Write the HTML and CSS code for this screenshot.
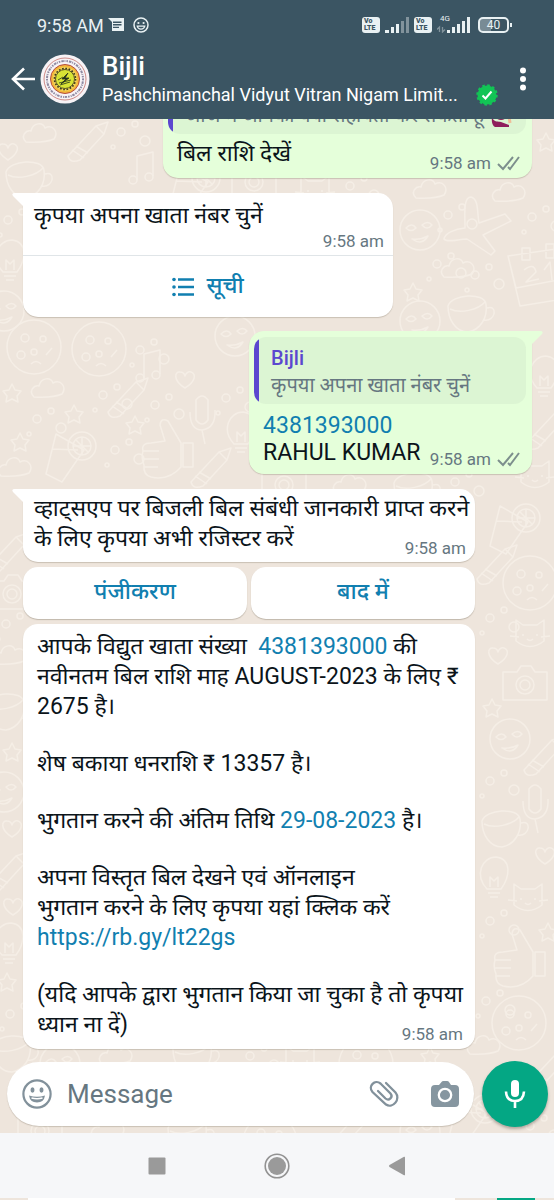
FILE: index.html
```html
<!DOCTYPE html>
<html lang="hi">
<head>
<meta charset="utf-8">
<meta name="viewport" content="width=device-width, initial-scale=1">
<title>Bijli</title>
<link rel="stylesheet" href="styles.css">
</head>
<body>
<svg class="wallpaper" viewBox="0 0 554 1200" preserveAspectRatio="xMidYMin slice" aria-hidden="true">
  <defs>
    <g id="star"><path d="M0-9 3-3 9-2 5 3 6 9 0 6-6 9-5 3-9-2-3-3Z"/></g>
    <g id="heart"><path d="M0 8C-13 0-10-9-5-8Q-1-8 0-4 2-9 6-8C12-6 10 2 0 8Z"/></g>
    <g id="cloud"><path d="M-14 8C-20 2-14-4-9-3-7-12 3-12 5-6 13-10 19-2 14 5Q5 9-14 8Z"/></g>
    <g id="mug"><path d="M-20-6C-16-18 16-20 18-8 20 6 12 18 0 20-12 20-20 8-20-6ZM-18-3C-8 2 10-2 17-10M19-4C30-8 28 10 16 8"/></g>
    <g id="smile"><circle r="20"/><path d="M-14-2Q-8-8-4-2-9 3-14-2ZM2-5Q8-10 12-5 7 1 2-5ZM-8 9Q1 10 8 6 2 16-8 9Z"/></g>
    <g id="plane"><path d="M-4 8C-12 8-24 12-27 8-26 2-16-2-6-3-6-16-8-34 0-34 8-32 6-18 8-8L34-17 40-10 12 4 24 20 20 24Z"/></g>
    <g id="crayon"><path d="M-20 14 8-16 20-20 16-8-8 18Q-18 22-20 14ZM8-16 16-8M-16 8-4 16M-12 4 0 11"/></g>
    <g id="thumb"><path d="M-18-2Q-20-10-10-10L4-12-1-28Q0-36 7-32L20-10V14Q8 28-10 24-18 22-17 12-20 5-18-2ZM-18-2H-2M-18 6H-2M-17 14H-3M22-10H32V14H22Z"/></g>
    <g id="mic2"><path d="M-6-14Q0-22 6-14V6Q0 14-6 6ZM-12-2Q-12 16 0 16 14 14 13-4M0 16 3 30"/></g>
    <g id="glass"><path d="M-12-24-22 16-6 24 16-8ZM-16-9 10-8"/><circle cx="14" cy="-12" r="14"/><circle cx="14" cy="-12" r="9"/><path d="M14-21V-3M5-12H23M8-18 20-6"/></g>
    <g id="cookie"><circle r="27"/><circle cx="-9" cy="-9" r="4"/><circle cx="9" cy="-8" r="3"/><circle cy="5" r="3"/><circle cx="-13" cy="8" r="4"/><path d="M12 8 18 1M-3 17Q2 12 7 17"/></g>
    <g id="calendar"><path d="M-28-14 26-22 34 28-16 36ZM-28-14-20 18 32 8M-14-22H-6V-10H-14ZM10-26H18V-12H10ZM-12 0Q-2-8 0 2L-10 12 3 9M8 0 14-8 16 10"/></g>
    <g id="bulb"><path d="M-7 12C-20-2-12-20 2-20 18-18 16 0 7 12ZM-6 16H6M-4 20H4M-4 10V0L0 4 4 0V10"/></g>
    <g id="camera2"><path d="M-22-12H-8L-4-18H6L10-12H22V16H-22Z"/><circle cy="1" r="9"/><circle cy="1" r="5"/></g>
    <g id="note"><path d="M-6 12V-12L10-16V8"/><circle cx="-10" cy="12" r="4"/><circle cx="6" cy="9" r="4"/></g>
    <g id="dots"><circle r="4"/><circle cx="14" cy="-8" r="3"/><circle cx="24" cy="9" r="5"/><circle cx="-8" cy="15" r="2"/></g>
    <g id="cat"><path d="M-14-14-7-9H7L14-14V7Q0 18-14 7ZM-7 0V2M7 0V2M-3 5Q0 8 3 5M-20 2-11 3M20 2 11 3"/></g>
  </defs>
  <g class="doodles">
    <use href="#cloud" x="40" y="134"/><use href="#crayon" x="88" y="142"/><use href="#dots" x="121" y="132"/><use href="#heart" x="8" y="152"/><use href="#note" x="143" y="168"/><use href="#star" x="546" y="142"/><use href="#mug" x="26" y="178"/><use href="#glass" x="192" y="190"/><use href="#camera2" x="254" y="181"/><use href="#cat" x="315" y="190"/><use href="#dots" x="350" y="186"/>
    <use href="#smile" x="420" y="230"/><use href="#plane" x="471" y="231"/><use href="#cloud" x="509" y="193"/><use href="#cloud" x="430" y="190"/><use href="#calendar" x="536" y="270"/><use href="#cloud" x="458" y="269"/><use href="#mug" x="468" y="312"/><use href="#smile" x="420" y="321"/><use href="#dots" x="448" y="215"/><use href="#dots" x="437" y="264"/><use href="#dots" x="475" y="275"/><use href="#dots" x="532" y="217"/><use href="#star" x="413" y="292"/>
    <use href="#bulb" x="10" y="260"/><use href="#smile" x="4" y="311"/><use href="#dots" x="8" y="220"/>
    <use href="#cookie" x="99" y="349"/><use href="#cookie" x="34" y="347"/><use href="#cloud" x="48" y="389"/><use href="#crayon" x="128" y="398"/><use href="#heart" x="185" y="380"/><use href="#mic2" x="202" y="414"/><use href="#thumb" x="161" y="453"/><use href="#glass" x="68" y="458"/><use href="#star" x="12" y="393"/><use href="#star" x="74" y="414"/><use href="#star" x="135" y="425"/><use href="#dots" x="103" y="395"/><use href="#dots" x="140" y="350"/><use href="#dots" x="37" y="419"/><use href="#dots" x="115" y="450"/><use href="#dots" x="155" y="405"/><use href="#smile" x="235" y="336"/><use href="#note" x="150" y="366"/><use href="#star" x="20" y="442"/><use href="#cloud" x="15" y="468"/><use href="#bulb" x="241" y="432"/><use href="#crayon" x="211" y="468"/><use href="#dots" x="226" y="398"/>
    <use href="#bulb" x="544" y="376"/><use href="#crayon" x="546" y="430"/><use href="#cat" x="535" y="475"/><use href="#camera2" x="284" y="484"/><use href="#cloud" x="350" y="485"/><use href="#mug" x="414" y="489"/><use href="#dots" x="455" y="482"/>
    <use href="#crayon" x="8" y="553"/><use href="#camera2" x="12" y="593"/><use href="#dots" x="6" y="624"/><use href="#cloud" x="10" y="656"/><use href="#mug" x="6" y="710"/><use href="#star" x="12" y="752"/><use href="#smile" x="4" y="792"/><use href="#heart" x="12" y="829"/><use href="#crayon" x="8" y="872"/><use href="#heart" x="13" y="907"/><use href="#bulb" x="9" y="943"/><use href="#star" x="7" y="982"/><use href="#dots" x="10" y="1014"/><use href="#mug" x="12" y="1052"/>
    <use href="#glass" x="512" y="530"/><use href="#cookie" x="530" y="583"/><use href="#crayon" x="497" y="565"/><use href="#dots" x="490" y="618"/><use href="#cat" x="530" y="634"/><use href="#heart" x="498" y="656"/><use href="#camera2" x="525" y="684"/><use href="#star" x="492" y="708"/><use href="#smile" x="510" y="739"/><use href="#crayon" x="544" y="756"/><use href="#dots" x="490" y="781"/><use href="#mic2" x="535" y="803"/><use href="#mug" x="502" y="827"/><use href="#heart" x="545" y="856"/><use href="#bulb" x="494" y="877"/><use href="#cat" x="528" y="898"/><use href="#dots" x="490" y="921"/><use href="#thumb" x="513" y="962"/><use href="#star" x="548" y="932"/><use href="#cookie" x="519" y="1023"/><use href="#dots" x="486" y="1001"/><use href="#cloud" x="484" y="1046"/><use href="#crayon" x="548" y="1070"/>
    <use href="#smile" x="60" y="1064"/><use href="#cloud" x="116" y="1056"/><use href="#mug" x="193" y="1055"/><use href="#dots" x="250" y="1056"/><use href="#cookie" x="366" y="1064"/><use href="#star" x="430" y="1056"/><use href="#cat" x="300" y="1060"/><use href="#camera2" x="40" y="1130"/><use href="#cloud" x="108" y="1130"/><use href="#mug" x="188" y="1134"/><use href="#cookie" x="270" y="1142"/><use href="#crayon" x="350" y="1130"/><use href="#smile" x="420" y="1132"/><use href="#glass" x="471" y="1121"/><use href="#dots" x="530" y="1126"/>
  </g>
</svg>

<header class="top">
  <div class="status">
    <span class="clock">9:58 AM</span>
    <svg class="status-msg" viewBox="0 0 16 14" aria-hidden="true"><path fill="#e9f1f3" d="M0 0H16V13H4V4Z"/><path stroke="#3b5563" stroke-width="1.4" d="M5 4.2H13.5M5 6.8H13.5M5 9.4H11"/></svg>
    <svg class="status-face" viewBox="0 0 16 16" aria-hidden="true"><circle cx="8" cy="8" r="7" fill="none" stroke="#e9f1f3" stroke-width="1.5"/><circle cx="5.4" cy="6" r="1.1" fill="#e9f1f3"/><circle cx="10.6" cy="6" r="1.1" fill="#e9f1f3"/><path fill="none" stroke="#e9f1f3" stroke-width="1.2" d="M4.200 9.200H11.800Q11 12.200 8 12.200T4.200 9.200Z"/></svg>
    <span class="push"></span>
    <span class="volte">Vo<br>LTE</span>
    <svg class="bars" viewBox="0 0 25 16" aria-hidden="true"><path fill="#e9f1f3" d="M0 13H4V16H0ZM6 10H9V16H6ZM11 7H14V16H11Z"/><path fill="#82939c" d="M16 4H19V16H16ZM21 0H24V16H21Z"/></svg>
    <span class="volte">Vo<br>LTE</span>
    <span class="net"><span class="gen">4G</span>
    <svg class="bars wide-bars" viewBox="0 0 34 16" aria-hidden="true"><path stroke="#82939c" stroke-width="1.3" fill="none" d="M2.500 15V10L0 12.500M5.500 10V15L8 12.500"/><path fill="#e9f1f3" d="M10 13H13V16H10ZM15 10H18V16H15ZM20 7H23V16H20ZM25 4H28V16H25ZM30 0H33V16H30Z"/></svg></span>
    <span class="battery">40</span>
  </div>
  <div class="titlebar">
    <button class="icon-btn back" type="button" aria-label="Back"><svg width="24" height="24" viewBox="0 0 24 24"><path fill="none" stroke="#fff" stroke-width="2.600" d="M13 1.500 2 12 13 22.500M2 12H24"/></svg></button>
    <svg class="avatar" viewBox="0 0 50 50" aria-hidden="true">
      <circle cx="25" cy="25" r="24.500" fill="#f7f3f6"/>
      <circle cx="25" cy="25" r="21" fill="none" stroke="#c4716c" stroke-width=".8"/>
      <circle cx="25" cy="25" r="18" fill="none" stroke="#8f8aa2" stroke-width="2" stroke-dasharray="1.500 1 2.500 .8 .9 1.100"/>
      <circle cx="25" cy="25" r="14.500" fill="#f2b93b" stroke="#b64a40" stroke-width="1"/>
      <circle cx="25" cy="25" r="12" fill="#f6d65c"/>
      <circle cx="25" cy="25" r="10.500" fill="none" stroke="#3b3a1c" stroke-width="1.700" stroke-dasharray="1.700 1.600"/>
      <circle cx="25" cy="25" r="9.500" fill="#d8e335" stroke="#3b3a1c" stroke-width=".8"/>
      <path stroke="#26331c" stroke-width=".8" fill="#26331c" d="M28 19 22 25H26L21 30 29 24H25ZM18 26 23 23M19 29 31 26M20 31 30 28"/>
    </svg>
    <div class="who">
      <h1>Bijli</h1>
      <div class="sub"><span class="sub-text">Pashchimanchal Vidyut Vitran Nigam Limit...</span>
        <svg class="verified" viewBox="0 0 22 22" role="img" aria-label="Verified"><circle cx="11" cy="11" r="9.500" fill="#12c455"/><circle cx="11" cy="11" r="9.500" fill="none" stroke="#12c455" stroke-width="2.400" stroke-dasharray="2.500 2.475"/><path fill="none" stroke="#fff" stroke-width="2" d="M6.500 11.500 9.500 14.500 15.500 7.500"/></svg>
      </div>
    </div>
    <button class="icon-btn more" type="button" aria-label="More options"><svg width="8" height="24" viewBox="0 0 8 24"><g fill="#fff"><circle cx="4" cy="3.500" r="3"/><circle cx="4" cy="12" r="3"/><circle cx="4" cy="20.500" r="3"/></g></svg></button>
  </div>
</header>

<main class="chat">
  <article class="bubble out first">
    <div class="quote"><p>आज मैं आपकी क्या सहायता कर सकता हूँ
      <svg class="raise" viewBox="0 0 22 22" aria-hidden="true"><circle cx="11" cy="8" r="7" fill="#8b2457"/><circle cx="12" cy="9" r="5" fill="#efbd98"/><path fill="#8f1f5c" d="M2 12C4 18 8 16 11 17L19 20V22H5Q1 20 2 12Z"/><path stroke="#efbd98" stroke-width="3" d="M18 4 20 18"/></svg></p></div>
    <p class="text">बिल राशि देखें <span class="time">9:58 am <svg class="ticks" viewBox="0 0 23 16"><path d="M1 9 6 14 16 2M11 12 13 14 22 2"/></svg></span></p>
  </article>

  <article class="bubble in list tail">
    <svg class="beak" viewBox="0 0 14 16" aria-hidden="true"><path d="M14 0H3Q-1 0 1 3L14 16Z"/></svg>
    <p class="text">कृपया अपना खाता नंबर चुनें</p>
    <div class="stamp">9:58 am</div>
    <button class="list-btn" type="button"><svg width="22" height="20" viewBox="0 0 22 20" aria-hidden="true"><path stroke="#117fb0" stroke-width="2.400" d="M6 2.500H22M6 10H22M6 17.500H22"/><g fill="#117fb0"><circle cx="2" cy="2.500" r="1.800"/><circle cx="2" cy="10" r="1.800"/><circle cx="2" cy="17.500" r="1.800"/></g></svg>सूची</button>
  </article>

  <article class="bubble out tail">
    <svg class="beak" viewBox="0 0 14 16" aria-hidden="true"><path d="M0 0H11Q15 0 13 3L0 16Z"/></svg>
    <div class="quote"><strong>Bijli</strong><p>कृपया अपना खाता नंबर चुनें</p></div>
    <p class="text latin"><a href="tel:4381393000">4381393000</a><br>RAHUL KUMAR <span class="time">9:58 am <svg class="ticks" viewBox="0 0 23 16"><path d="M1 9 6 14 16 2M11 12 13 14 22 2"/></svg></span></p>
  </article>

  <article class="bubble in wide tail">
    <svg class="beak" viewBox="0 0 14 16" aria-hidden="true"><path d="M14 0H3Q-1 0 1 3L14 16Z"/></svg>
    <p class="text">व्हाट्सएप पर बिजली बिल संबंधी जानकारी प्राप्त करने<br>के लिए कृपया अभी रजिस्टर करें <span class="time">9:58 am</span></p>
  </article>
  <div class="replies">
    <button type="button">पंजीकरण</button>
    <button type="button">बाद में</button>
  </div>

  <article class="bubble in wide bill">
    <p class="text">आपके विद्युत खाता संख्या&nbsp; <a href="tel:4381393000">4381393000</a> की<br>नवीनतम बिल राशि माह AUGUST-2023 के लिए ₹<br>2675 है।</p>
    <p class="text">शेष बकाया धनराशि ₹ 13357 है।</p>
    <p class="text">भुगतान करने की अंतिम तिथि <a href="#date">29-08-2023</a> है।</p>
    <p class="text">अपना विस्तृत बिल देखने एवं ऑनलाइन<br>भुगतान करने के लिए कृपया यहां क्लिक करें<br><a href="https://rb.gy/lt22gs">https://rb.gy/lt22gs</a></p>
    <p class="text">(यदि आपके द्वारा भुगतान किया जा चुका है तो कृपया<br>ध्यान ना दें) <span class="time">9:58 am</span></p>
  </article>
</main>

<form class="composer">
  <div class="field">
    <button class="icon-btn" type="button" aria-label="Emoji"><svg width="30" height="30" viewBox="0 0 30 30"><circle cx="15" cy="15" r="13.600" fill="none" stroke="#82919b" stroke-width="2.200"/><ellipse cx="10.500" cy="11" rx="2" ry="2.700" fill="#82919b"/><ellipse cx="19.500" cy="11" rx="2" ry="2.700" fill="#82919b"/><path fill="#82919b" d="M7 16.500Q15 19 23 16.500 22 23.500 15 23.500T7 16.500Z"/><path stroke="#fff" stroke-width="1.400" fill="none" d="M9.500 19Q15 20.500 20.500 19"/></svg></button>
    <input type="text" placeholder="Message" aria-label="Message">
    <button class="icon-btn" type="button" aria-label="Attach"><svg width="30" height="28" viewBox="0 0 30 28"><path fill="none" stroke="#82919b" stroke-width="2.300" stroke-linecap="round" d="M17 3 26.500 12.500C32 19 24 29 17 24.500L3.500 12C-1.500 6 6 -1 11.500 3.500L21.500 13.500C24.500 17 20 21.500 16.500 18.500L9 11"/></svg></button>
    <button class="icon-btn" type="button" aria-label="Camera"><svg width="28" height="26" viewBox="0 0 28 26"><path fill="#8696a0" d="M4 4H8L10.500 1Q11 0 12.500 0H16Q17.500 0 18 1L20 4H24Q28 4 28 8V22Q28 26 24 26H4Q0 26 0 22V8Q0 4 4 4Z"/><circle cx="14" cy="14" r="6.200" fill="none" stroke="#fff" stroke-width="2.300"/></svg></button>
  </div>
  <button class="voice" type="button" aria-label="Voice message"><svg width="22" height="28" viewBox="0 0 22 28"><rect x="7" y="0" width="8" height="17" rx="4" fill="#fff"/><path fill="none" stroke="#fff" stroke-width="2.600" d="M2 11.500Q2.500 21 11 21T20 11.500M11 21V28"/></svg></button>
</form>

<nav class="sysnav" aria-label="System">
  <button class="icon-btn" type="button" aria-label="Recent apps"><svg width="18" height="18" viewBox="0 0 18 18"><rect x=".5" y=".5" width="17" height="17" rx="1" fill="#9a9a9a"/></svg></button>
  <button class="icon-btn" type="button" aria-label="Home"><svg width="26" height="26" viewBox="0 0 26 26"><circle cx="13" cy="13" r="11.800" fill="none" stroke="#929292" stroke-width="1.600"/><circle cx="13" cy="13" r="9" fill="#9a9a9a"/></svg></button>
  <button class="icon-btn" type="button" aria-label="Go back"><svg width="18" height="20" viewBox="0 0 18 20"><path fill="#9a9a9a" d="M16 .8Q17 .3 17 1.500V18.500Q17 19.700 16 19.200L1.500 11Q.3 10 1.500 9Z"/></svg></button>
</nav>
<div class="under" aria-hidden="true"><span class="under-field"></span><span class="under-mic"></span></div>
</body>
</html>
```

FILE: styles.css
```css
* { box-sizing: border-box; }

body {
  margin: 0;
  height: 100vh;
  display: flex;
  flex-direction: column;
  position: relative;
  overflow: hidden;
  background: #eee5dc;
  color: #0b141a;
  font-family: Roboto, "Noto Sans Devanagari", "Noto Sans", sans-serif;
}

h1, p { margin: 0; }
a { color: #117fb0; text-decoration: none; }
button, input { font: inherit; }
svg { display: block; flex: none; }

.wallpaper {
  position: absolute;
  inset: 0;
  width: 100%;
  height: 100%;
  z-index: -1;
}
.doodles { fill: none; stroke: #f5eee6; stroke-width: 1.5; stroke-linejoin: round; }

.icon-btn {
  display: flex;
  padding: 0;
  border: 0;
  background: none;
}

/* Header */
.top {
  flex: none;
  background: #3b5563;
  color: #fff;
  padding-bottom: 11px;
}
.status {
  display: flex;
  align-items: center;
  height: 50px;
  padding: 0 45px 0 37px;
  color: #e9f1f3;
}
.clock { font-size: 18px; margin-right: 4px; }
.status-msg { width: 16px; height: 14px; margin-right: 9px; }
.status-face { width: 16px; height: 16px; }
.push { flex: 1; }
.volte {
  width: 18px;
  height: 16px;
  padding: 1px 2px;
  border-radius: 3px;
  background: #e9f1f3;
  color: #3b5563;
  font-size: 7px;
  font-weight: 900;
  line-height: 7px;
}
.bars { width: 25px; height: 16px; margin: 0 4px 0 5px; }
.net { position: relative; margin: 0 7px 0 5px; }
.gen { position: absolute; top: -3px; left: 3px; font-size: 8px; line-height: 9px; }
.wide-bars { width: 34px; margin: 0; }
.battery {
  position: relative;
  width: 31px;
  height: 16px;
  border: 2px solid #e9f1f3;
  border-radius: 5px;
  background: linear-gradient(90deg, #788b95 40%, transparent 40%);
  font-size: 12px;
  line-height: 12px;
  text-align: center;
}
.battery::after {
  content: "";
  position: absolute;
  right: -5px;
  top: 4px;
  width: 2px;
  height: 4px;
  background: #e9f1f3;
}
.titlebar {
  display: flex;
  align-items: center;
  padding: 0 27px 0 11px;
}
.avatar { width: 50px; height: 50px; margin: 0 12px 0 5px; }
.who { flex: 1; min-width: 0; }
.who h1 { font-size: 26px; font-weight: 500; line-height: 32px; }
.sub { display: flex; align-items: center; line-height: 26px; }
.sub-text { font-size: 18px; white-space: nowrap; }
.verified { width: 22px; height: 22px; margin-left: 18px; }

/* Messages */
.chat {
  flex: 1;
  min-height: 0;
  overflow: hidden;
  display: flex;
  flex-direction: column;
  justify-content: flex-end;
  padding: 0 22px 12px 23px;
}
.bubble {
  position: relative;
  flex: none;
  margin-bottom: 14px;
  border-radius: 15px;
  box-shadow: 0 1px 1px rgba(90, 80, 60, .25);
}
.text { font-size: 23px; line-height: 30px; white-space: nowrap; }
.text::after { content: ""; display: block; clear: both; }
.in { align-self: flex-start; background: #fff; padding: 5px 9px 4px 11px; }
.out { align-self: flex-end; margin-bottom: 15px; background: #e5ffda; padding: 6px 6px 5px 5px; }
.out .text { padding: 5px 6px 0 9px; }
.out .latin { padding-top: 8px; line-height: 27px; }
.first { width: 369px; }
.wide, .replies { width: 100%; max-width: 452px; }
.list { width: 370px; padding: 8px 0 0; }
.list .text { padding-left: 11px; }

.time, .stamp {
  color: #667781;
  font-size: 17px;
  line-height: 20px;
}
.time {
  float: right;
  display: flex;
  align-items: center;
  gap: 6px;
  margin: 14px 0 0 8px;
}
.latin .time { margin-top: 10px; }
.stamp { padding: 0 9px 4px; text-align: right; }
.ticks { width: 23px; height: 16px; fill: none; stroke: #7d8f8d; stroke-width: 2; }

.beak { position: absolute; top: 0; width: 14px; height: 16px; }
.in .beak { left: -11px; fill: #fff; }
.out .beak { right: -11px; fill: #e5ffda; }
.in.tail { border-top-left-radius: 0; }
.out.tail { border-top-right-radius: 0; }

.quote {
  padding: 7px 56px 5px 17px;
  border-radius: 12px;
  background: linear-gradient(90deg, #5b47cf 5px, #dcf5d3 5px);
}
.quote strong {
  display: block;
  color: #5b47cf;
  font-size: 20px;
  font-weight: 500;
  line-height: 28px;
}
.quote p { font-size: 20px; line-height: 27px; color: #667781; white-space: nowrap; }
.first .quote { padding-right: 10px; }
.first .quote p { display: flex; align-items: center; gap: 6px; }
.raise { width: 22px; height: 22px; }

.list-btn {
  display: flex;
  align-items: center;
  justify-content: center;
  gap: 12px;
  width: 100%;
  height: 62px;
  padding: 0;
  border: 0;
  border-top: 1px solid #e0e5e8;
  background: none;
  color: #117fb0;
  font-size: 23px;
  font-weight: 500;
}
.wide.tail { margin-bottom: 5px; }
.replies { flex: none; display: flex; gap: 4px; margin-bottom: 5px; }
.replies button {
  flex: 1;
  height: 52px;
  padding: 0;
  border: 0;
  border-radius: 15px;
  background: #fff;
  box-shadow: 0 1px 1px rgba(90, 80, 60, .3);
  color: #117fb0;
  font-size: 23px;
  font-weight: 500;
}
.bill {
  display: flex;
  flex-direction: column;
  gap: 27px;
  margin-bottom: 0;
  padding: 8px 12px 5px 14px;
}

/* Composer */
.composer {
  flex: none;
  display: flex;
  align-items: center;
  gap: 8px;
  padding: 0 6px 6px 7px;
}
.field {
  flex: 1;
  min-width: 0;
  display: flex;
  align-items: center;
  gap: 32px;
  height: 64px;
  padding: 0 15px;
  border-radius: 32px;
  background: #fff;
  box-shadow: 0 1px 1px rgba(90, 80, 60, .25);
}
.field input {
  flex: 1;
  min-width: 0;
  margin-left: -17px;
  padding: 0;
  border: 0;
  outline: 0;
  background: none;
  color: #0b141a;
  font-size: 26px;
}
.field input::placeholder { color: #667781; opacity: 1; }
.voice {
  display: flex;
  align-items: center;
  justify-content: center;
  width: 66px;
  height: 66px;
  padding: 0;
  border: 0;
  border-radius: 50%;
  background: #04a784;
  box-shadow: 0 2px 3px rgba(60, 50, 40, .35);
}

/* System navigation */
.sysnav {
  flex: none;
  display: flex;
  align-items: center;
  justify-content: center;
  gap: 98px;
  height: 65px;
  background: #f6f7f9;
}
.under { flex: none; display: flex; gap: 42px; height: 2px; padding: 0 19px 0 28px; background: #eee5dc; }
.under-field { flex: 1; background: #fff; }
.under-mic { width: 38px; background: #04a784; }
```
